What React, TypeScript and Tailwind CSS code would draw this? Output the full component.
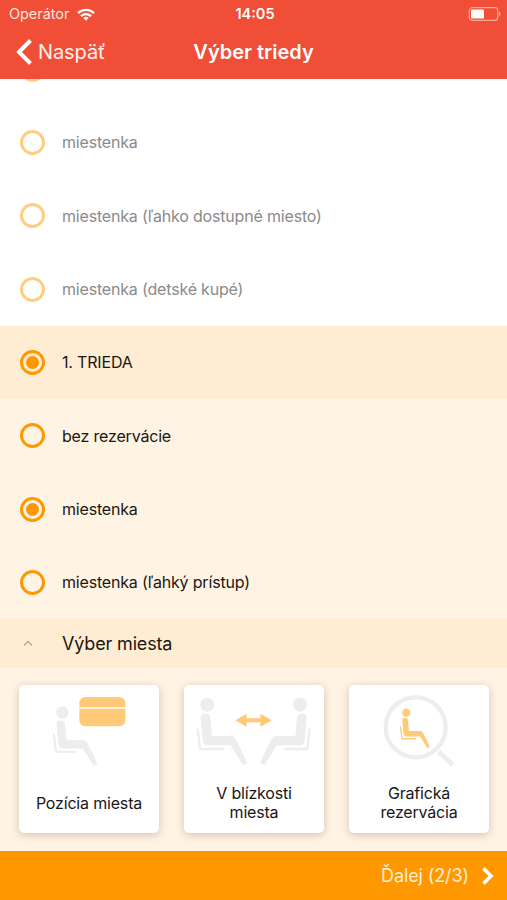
import type { ReactNode } from 'react'

type OptionProps = {
  checked?: boolean
  faded?: boolean
  heading?: boolean
  label?: string
}

function Option({ checked, faded, heading, label }: OptionProps) {
  return (
    <label
      className={`flex h-[73.33px] shrink-0 items-center pl-5 ${
        faded ? 'bg-white' : heading ? 'bg-[#feecd3]' : 'bg-[#fff3e4]'
      }`}
    >
      <span
        className={`flex size-[25px] items-center justify-center rounded-full border-[3px] ${
          faded ? 'border-[#ffcc80]' : 'border-[#ff9800]'
        }`}
      >
        {checked ? (
          <span className="size-[13px] rounded-full bg-[#ff9800]" />
        ) : null}
      </span>
      {label ? (
        <span
          className={`ml-[17px] text-base tracking-[-0.18px] ${
            faded ? 'text-[#8a8a8a]' : 'text-[#1b1711]'
          }`}
        >
          {label}
        </span>
      ) : null}
    </label>
  )
}

function SeatedPerson({ transform }: { transform?: string }) {
  return (
    <g transform={transform}>
      <circle cx="98" cy="91" r="21" />
      <path d="M78 130q0-12 14-12q14 0 15 12L112 185H170q8 0 12 7L218 265L205 273L168 213H100q-14 0-16-14Z" />
      <path
        d="M69 163L76 224H147"
        fill="none"
        stroke="currentColor"
        strokeWidth="7"
      />
    </g>
  )
}

type CardProps = {
  children: ReactNode
  icon: ReactNode
}

function Card({ children, icon }: CardProps) {
  return (
    <button
      className="flex h-[148px] flex-col rounded-[5px] bg-white shadow-[0_2px_8px_rgba(90,60,20,0.26)]"
      type="button"
    >
      <svg
        className="h-[90px] w-[140px] shrink-0 fill-current text-[#ededed]"
        viewBox="28 32 420 270"
      >
        {icon}
      </svg>
      <span className="flex h-[56px] w-full items-center justify-center text-center text-base leading-[19px] tracking-[-0.18px] text-[#171717]">
        <span>{children}</span>
      </span>
    </button>
  )
}

function StatusBar() {
  return (
    <div className="grid h-7 grid-cols-[1fr_auto_1fr] items-center pr-[6px] pl-[9px] text-[14.5px]">
      <div className="flex items-center gap-2 text-[#ffe3dd]">
        <span className="tracking-[-0.05px]">Operátor</span>
        <svg className="h-[13px] w-[18px]" viewBox="0 0 18 13">
          <g fill="none" stroke="#fff" strokeWidth="2.3">
            <path d="M1 5.1a11.3 11.3 0 0 1 16 0" />
            <path d="M4 8.3a7 7 0 0 1 10 0" />
          </g>
          <path d="M9 12.8L6.3 10a3.8 3.8 0 0 1 5.4 0Z" fill="#fff" />
        </svg>
      </div>
      <span className="text-center font-semibold">14:05</span>
      <svg className="h-[14px] w-[33px] justify-self-end" viewBox="0 0 33 14">
        <rect
          fill="none"
          height="12.6"
          rx="3"
          stroke="#f9a89a"
          strokeWidth="1.2"
          width="28.6"
          x="1.2"
          y=".7"
        />
        <rect fill="#fff" height="9" rx="1" width="13" x="3" y="2.5" />
        <path d="M31 4.6q1.6.7 1.6 2.4T31 9.4Z" fill="#f9a89a" />
      </svg>
    </div>
  )
}

export default function App() {
  return (
    <div className="flex h-[900px] w-[507px] flex-col overflow-hidden bg-white font-['Inter',sans-serif]">
      <header className="h-[79px] shrink-0 bg-[#f04e37] text-white">
        <StatusBar />
        <div className="grid h-12 grid-cols-[1fr_auto_1fr] items-center pr-4 pl-4">
          <button
            className="flex items-center gap-[6px] text-xl text-[#fff0ed]"
            type="button"
          >
            <svg className="h-[26px] w-4" viewBox="0 0 16 26">
              <path
                d="M14.5 1.5L3 13L14.5 24.5"
                fill="none"
                stroke="#fff"
                strokeWidth="4"
              />
            </svg>
            <span className="tracking-[-0.1px]">Naspäť</span>
          </button>
          <h1 className="text-xl font-semibold">Výber triedy</h1>
        </div>
      </header>

      <main className="flex h-[540px] shrink-0 flex-col justify-end overflow-hidden">
        <Option faded />
        <Option faded label="miestenka" />
        <Option faded label="miestenka (ľahko dostupné miesto)" />
        <Option faded label="miestenka (detské kupé)" />
        <Option checked heading label="1. TRIEDA" />
        <Option label="bez rezervácie" />
        <Option checked label="miestenka" />
        <Option label="miestenka (ľahký prístup)" />
      </main>

      <section className="h-[232px] shrink-0 bg-[#fff3e4]">
        <h2 className="flex h-[49px] items-center bg-[#feecd3] pl-[23px] text-lg tracking-[-0.16px] text-[#1b1711]">
          <svg className="mr-[29px] h-[7px] w-[10px]" viewBox="0 0 10 7">
            <path
              d="M1 5.5L5 1.5L9 5.5"
              fill="none"
              stroke="#b5a898"
              strokeWidth="1.4"
            />
          </svg>
          Výber miesta
        </h2>
        <div className="grid grid-cols-[140px_140px_140px] gap-[25px] pt-[17px] pl-[19px]">
          <Card
            icon={
              <>
                <SeatedPerson transform="translate(72 35) scale(.88)" />
                <rect
                  fill="#ffc978"
                  height="88"
                  rx="18"
                  width="138"
                  x="209"
                  y="68"
                />
                <path d="M209 101H347" stroke="#fff" strokeWidth="5" />
              </>
            }
          >
            Pozícia miesta
          </Card>
          <Card
            icon={
              <>
                <SeatedPerson />
                <SeatedPerson transform="translate(474 0) scale(-1 1)" />
                <path
                  d="M182 138L216 118V132H257V118L291 138L257 158V144H216V158Z"
                  fill="#ffc978"
                />
              </>
            }
          >
            V blízkosti
            <br />
            miesta
          </Card>
          <Card
            icon={
              <>
                <circle
                  cx="228"
                  cy="159"
                  fill="none"
                  r="90"
                  stroke="currentColor"
                  strokeWidth="13"
                />
                <path
                  d="M297 232L339 272"
                  stroke="currentColor"
                  strokeWidth="15"
                />
                <g className="text-[#ffc978]" fill="#ffc978">
                  <SeatedPerson transform="translate(142 61) scale(.59)" />
                </g>
              </>
            }
          >
            Grafická
            <br />
            rezervácia
          </Card>
        </div>
      </section>

      <footer className="flex h-[49px] shrink-0 items-center justify-end bg-[#ff9800] pr-[13px]">
        <button
          className="flex items-center gap-[13px] text-lg tracking-[-0.1px] text-[#ffefd2]"
          type="button"
        >
          Ďalej (2/3)
          <svg className="h-[18px] w-3" viewBox="0 0 12 18">
            <path
              d="M1.5 1.5L9 9L1.5 16.5"
              fill="none"
              stroke="#fff"
              strokeWidth="3.6"
            />
          </svg>
        </button>
      </footer>
    </div>
  )
}
